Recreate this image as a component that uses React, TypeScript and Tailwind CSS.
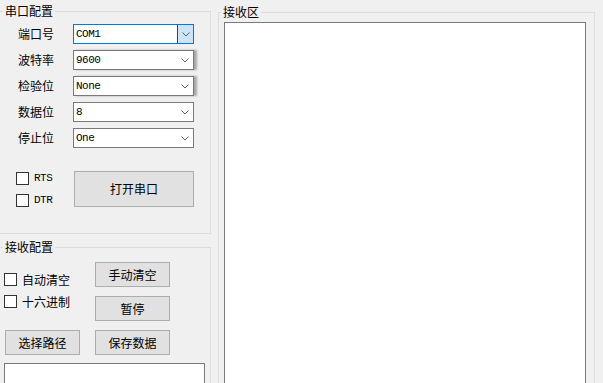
import React from 'react';

function Chevron() {
  return (
    <svg width="8" height="5" viewBox="0 0 8 5" fill="none">
      <polyline points="0.5,0.5 4,4 7.5,0.5" stroke="#606060" strokeWidth="1" />
    </svg>
  );
}

function Combo({ value, active, shadow }: { value: string; active?: boolean; shadow?: boolean }) {
  return (
    <div
      className={`flex h-[20px] w-[121px] items-center bg-white border ${
        active ? 'border-[#0078d7]' : 'border-[#7a7a7a]'
      } ${shadow ? 'shadow-[3px_0_2px_rgba(0,0,0,0.3)]' : ''}`}
    >
      <span className="flex-1 pl-[2px] font-['Liberation_Mono',monospace] text-[11px] leading-none tracking-[-0.5px] text-black">
        {value}
      </span>
      <span
        className={`flex h-full w-[16px] items-center justify-center ${
          active ? 'border-l border-[#005499] bg-[#cce4f7]' : ''
        }`}
      >
        <Chevron />
      </span>
    </div>
  );
}

function Check({ label, mono }: { label: string; mono?: boolean }) {
  return (
    <div className="flex h-[13px] items-center">
      <span className="h-[13px] w-[13px] border border-[#333] bg-white" />
      <span
        className={`ml-[5px] leading-none text-black ${
          mono ? "font-['Liberation_Mono',monospace] text-[11px] tracking-[-0.5px]" : 'text-[12px]'
        }`}
      >
        {label}
      </span>
    </div>
  );
}

function Btn({ children, className = '' }: { children: React.ReactNode; className?: string }) {
  return (
    <div
      className={`flex items-center justify-center border border-[#adadad] bg-[#e1e1e1] text-[12px] text-black ${className}`}
    >
      {children}
    </div>
  );
}

const rows = [
  { label: '端口号', value: 'COM1', active: true },
  { label: '波特率', value: '9600', shadow: true },
  { label: '检验位', value: 'None', shadow: true },
  { label: '数据位', value: '8' },
  { label: '停止位', value: 'One' },
];

export default function App() {
  return (
    <div className="flex h-[383px] w-[603px] overflow-hidden bg-[#f0f0f0] font-['Noto_Sans_CJK_SC','Noto_Sans',sans-serif] text-black">
      {/* left column */}
      <div className="flex w-[211px] shrink-0 flex-col">
        <fieldset className="mt-[3px] w-[211px] border border-l-0 border-[#dcdcdc] pb-[26px]">
          <legend className="ml-[3px] px-[2px] text-[12px] leading-[16px]">串口配置</legend>
          <div className="flex flex-col gap-[6px] pt-[5px]">
            {rows.map((r) => (
              <div key={r.label} className="flex items-center pl-[18px]">
                <span className="w-[55px] text-[12px] leading-none">{r.label}</span>
                <Combo value={r.value} active={r.active} shadow={r.shadow} />
              </div>
            ))}
          </div>
          <div className="mt-[23px] flex">
            <div className="flex w-[74px] flex-col gap-[9px] pl-[16px] pt-[1px]">
              <Check label="RTS" mono />
              <Check label="DTR" mono />
            </div>
            <Btn className="h-[36px] w-[120px]">打开串口</Btn>
          </div>
        </fieldset>

        <fieldset className="mt-[5px] w-[211px] flex-1 border border-l-0 border-[#dcdcdc]">
          <legend className="ml-[3px] px-[2px] text-[12px] leading-[16px]">接收配置</legend>
          <div className="flex pt-[7px]">
            <div className="flex w-[95px] flex-col gap-[9px] pl-[4px] pt-[11px]">
              <Check label="自动清空" />
              <Check label="十六进制" />
            </div>
            <div className="flex flex-col gap-[9px]">
              <Btn className="h-[25px] w-[75px]">手动清空</Btn>
              <Btn className="h-[25px] w-[75px]">暂停</Btn>
            </div>
          </div>
          <div className="mt-[9px] flex gap-[15px] pl-[5px]">
            <Btn className="h-[25px] w-[75px]">选择路径</Btn>
            <Btn className="h-[25px] w-[75px]">保存数据</Btn>
          </div>
          <div className="ml-[4px] mt-[8px] h-[60px] w-[201px] border border-[#7a7a7a] bg-white" />
        </fieldset>
      </div>

      {/* receive area */}
      <fieldset className="ml-[7px] mt-[4px] h-[420px] w-[377px] shrink-0 border border-[#dcdcdc] pl-[5px] pr-[8px] pt-[2px]">
        <legend className="ml-[-3px] px-[2px] text-[12px] leading-[16px]">接收区</legend>
        <div className="h-[400px] w-full border border-[#7a7a7a] bg-white" />
      </fieldset>
    </div>
  );
}
